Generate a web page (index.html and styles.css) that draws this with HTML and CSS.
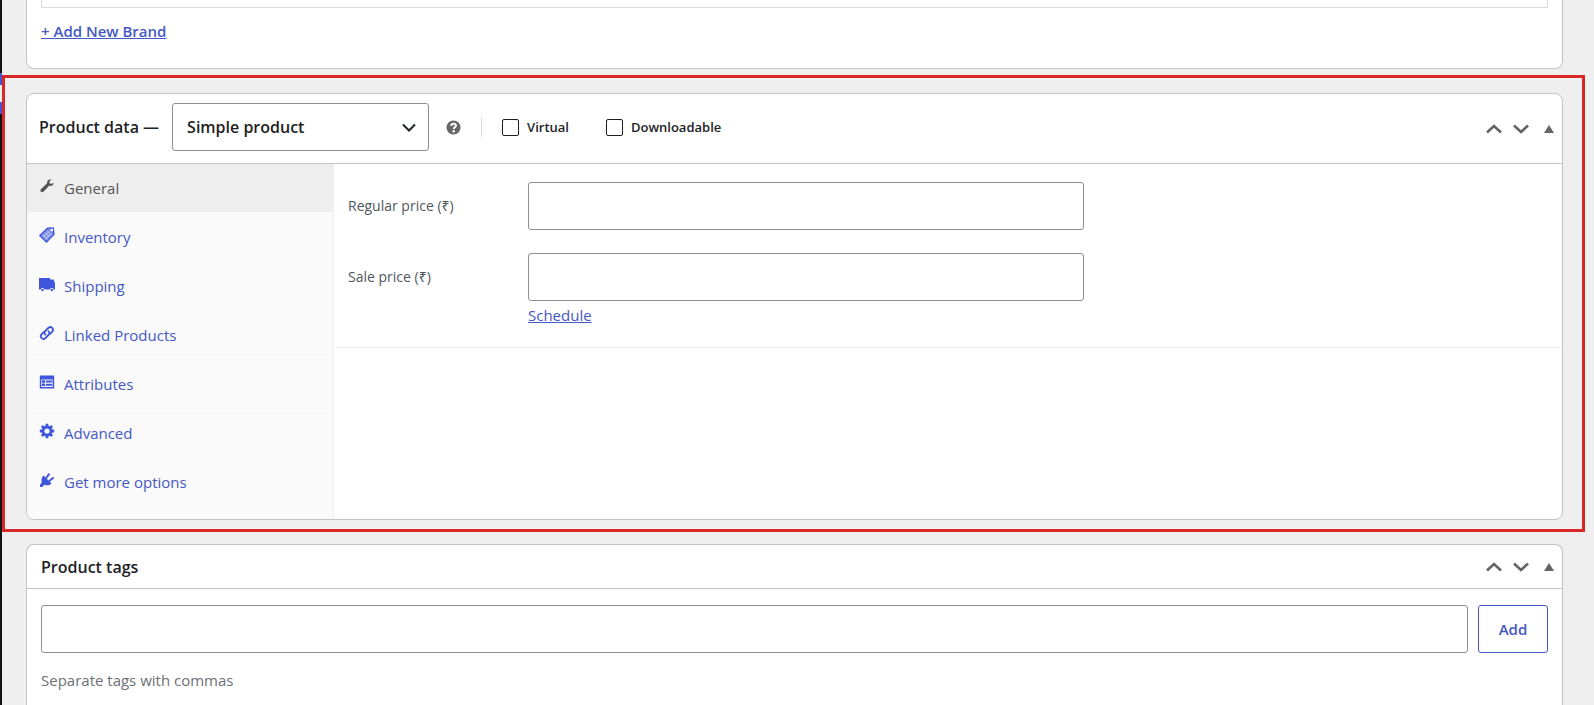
FILE: index.html
```html
<!DOCTYPE html>
<html lang="en">
<head>
  <meta charset="UTF-8">
  <meta name="viewport" content="width=device-width, initial-scale=1.0">
  <title>Edit product</title>
  <link rel="stylesheet" href="styles.css">
</head>
<body>
  <div class="menu-edge">
    <span class="menu-current"></span>
    <span class="menu-sub"></span>
    <span class="menu-current"></span>
  </div>

  <main class="content">
    <section class="postbox brands">
      <div class="brand-list"></div>
      <a class="link add-brand" href="#">+ Add New Brand</a>
    </section>

    <section class="postbox product-data">
      <header class="postbox-header data-header">
        <label class="title" for="product-type">Product data —</label>
        <div class="select-wrap">
          <select id="product-type">
            <option>Simple product</option>
          </select>
          <svg class="select-arrow" viewBox="0 0 14 8"><path d="M1 1l6 6 6-6" fill="none" stroke="currentColor" stroke-width="2"/></svg>
        </div>
        <svg class="help" viewBox="0 0 16 16">
          <circle cx="8" cy="8" r="7.5" fill="#666"/>
          <path d="M5.6 6.3c0-3.2 5-3.1 5-.3 0 1.7-2.4 1.8-2.4 3.5" fill="none" stroke="#fff" stroke-width="2.1"/>
          <circle cx="8.2" cy="12" r="1.3" fill="#fff"/>
        </svg>
        <div class="type-options">
          <label class="check"><input type="checkbox"> Virtual</label>
          <label class="check"><input type="checkbox"> Downloadable</label>
        </div>
        <div class="handles">
          <button type="button" aria-label="Move up"><svg viewBox="0 0 16 10"><path d="M1 8.5l7-6.5 7 6.5" fill="none" stroke="currentColor" stroke-width="2.6"/></svg></button>
          <button type="button" aria-label="Move down"><svg viewBox="0 0 16 10"><path d="M1 1.5l7 6.5 7-6.5" fill="none" stroke="currentColor" stroke-width="2.6"/></svg></button>
          <button type="button" class="toggle" aria-label="Toggle panel"><svg viewBox="0 0 10 8"><path d="M5 0l5 8H0z" fill="currentColor"/></svg></button>
        </div>
      </header>

      <div class="data-body">
        <nav class="tabs">
          <a class="tab active" href="#">
            <svg viewBox="0 0 16 16"><path d="M14.4 4.8l-2.2 1.3-1.7-1 .1-2 2.1-1.3C10.100.8 7.700 2.700 8.100 5.300L1.900 11.200c-1.500 1.600.8 4 2.500 2.500l5.800-5.900c2.700.6 4.800-.8 4.200-3z" fill="currentColor"/></svg>
            General
          </a>
          <a class="tab" href="#">
            <svg viewBox="0 0 16 16">
              <path d="M8.5 1.2l5.7-.3.8 6.3L7.500 15 .8 8.600z" fill="currentColor" opacity=".7"/>
              <path d="M8.5 1.2l5.7-.3.8 6.3L7.500 15 .8 8.600z" fill="none" stroke="currentColor" stroke-width="1.3"/>
              <path d="M4 7.5l5 5M6 5.5l5 5M8 3.5l5 5M4 10.5l6-6M6 12.500l6-6" stroke="#fff" stroke-width=".6"/>
              <circle cx="12.7" cy="3" r="1.3" fill="#fff"/>
            </svg>
            Inventory
          </a>
          <a class="tab" href="#">
            <svg viewBox="0 0 16 16"><path d="M0 2h11v1.500h3.500L16 7v6.500h-1.300a2 2 0 0 0-3.800 0H5.400a2 2 0 0 0-3.800 0H0z" fill="currentColor"/><circle cx="3.500" cy="14" r="1.200" fill="currentColor"/><circle cx="12.800" cy="14" r="1.200" fill="currentColor"/></svg>
            Shipping
          </a>
          <a class="tab" href="#">
            <svg viewBox="0 0 16 16"><g fill="none" stroke="currentColor" stroke-width="1.8" stroke-linecap="round"><path d="M6.300 9.700c-1.300-1.200-1-2.700 0-3.700l3-3c2.700-2.500 6.300.9 3.900 3.700l-2 2.100"/><path d="M9.500 6.300c1.300 1.200 1 2.700 0 3.700l-3 3c-2.700 2.500-6.300-.9-3.900-3.700l2-2.100"/></g></svg>
            Linked Products
          </a>
          <a class="tab" href="#">
            <svg viewBox="0 0 16 16"><path d="M.8 1.500h14.400v13H.8zM2.300 5.500v7.500h11.400V5.500z" fill="currentColor" fill-rule="evenodd"/><path d="M3 6.200h3v2.500H3zM6.800 6.500h6.500v2H6.800zM3 9.600h3V12H3zM6.800 9.800h6.500v2H6.800z" fill="currentColor"/></svg>
            Attributes
          </a>
          <a class="tab" href="#">
            <svg viewBox="0 0 16 16"><circle cx="8" cy="8" r="4" fill="none" stroke="currentColor" stroke-width="2.8"/><path d="M8 .8v3M8 12.200v3M.8 8h3M12.200 8h3M2.900 2.900L5 5M11 11l2.100 2.100M2.900 13.100L5 11M11 5l2.100-2.100" stroke="currentColor" stroke-width="2.8"/></svg>
            Advanced
          </a>
          <a class="tab" href="#">
            <svg viewBox="0 0 16 16"><path d="M4.500 3.500l8 8c-1.900 2-4.900 2.300-7 1.200L3.200 15H1v-2.200l1.800-2.300C1.900 8 2.700 5.300 4.500 3.500z" fill="currentColor"/><path d="M7.200 6L10 2.200M10.300 9l3.700-3" stroke="currentColor" stroke-width="2" stroke-linecap="round"/></svg>
            Get more options
          </a>
        </nav>

        <div class="panel">
          <div class="price-fields">
            <div class="field">
              <label for="regular-price">Regular price (₹)</label>
              <input type="text" id="regular-price">
            </div>
            <div class="field">
              <label for="sale-price">Sale price (₹)</label>
              <input type="text" id="sale-price">
            </div>
            <a class="link schedule" href="#">Schedule</a>
          </div>
        </div>
      </div>
    </section>

    <section class="postbox tags">
      <header class="postbox-header">
        <h2 class="title">Product tags</h2>
        <div class="handles">
          <button type="button" aria-label="Move up"><svg viewBox="0 0 16 10"><path d="M1 8.5l7-6.5 7 6.5" fill="none" stroke="currentColor" stroke-width="2.6"/></svg></button>
          <button type="button" aria-label="Move down"><svg viewBox="0 0 16 10"><path d="M1 1.5l7 6.5 7-6.5" fill="none" stroke="currentColor" stroke-width="2.6"/></svg></button>
          <button type="button" class="toggle" aria-label="Toggle panel"><svg viewBox="0 0 10 8"><path d="M5 0l5 8H0z" fill="currentColor"/></svg></button>
        </div>
      </header>
      <div class="tags-body">
        <div class="tag-row">
          <input type="text" aria-label="Add new tag" aria-describedby="tag-help">
          <button type="button" class="add-button">Add</button>
        </div>
        <p class="howto" id="tag-help">Separate tags with commas</p>
      </div>
    </section>
  </main>
</body>
</html>
```

FILE: styles.css
```css
* { box-sizing: border-box; }

body {
  display: flex;
  min-height: 100vh;
  margin: 0;
  background: #efefef;
  color: #1d2327;
  font-family: "Open Sans", "Noto Sans", sans-serif;
  font-size: 15px;
  line-height: 24px;
}

input, select, button { font-family: inherit; font-size: 15px; }

/* right edge of the admin menu */
.menu-edge {
  width: 2px;
  padding-top: 73px;
  background: #111214;
}
.menu-edge span { display: block; height: 12px; }
.menu-edge .menu-current { background: #4f51cf; }
.menu-edge .menu-sub { height: 17px; background: #efefef; }

.content {
  flex: 1;
  display: flex;
  flex-direction: column;
  gap: 24px;
  padding: 0 31px 0 24px;
}

.postbox {
  background: #fff;
  border: 1px solid #c3c4c7;
  border-radius: 8px;
}
.postbox-header {
  display: flex;
  align-items: center;
  height: 44px;
  padding: 0 8px 0 14px;
  border-bottom: 1px solid #c3c4c7;
}
.title { margin: 0; font-size: 16px; font-weight: 600; }

.link { color: #4558c4; text-decoration: underline; }

/* brands */
.brands {
  padding: 0 14px 25px;
  border-top: 0;
  border-radius: 0 0 8px 8px;
}
.brand-list {
  height: 8px;
  margin-bottom: 11px;
  border: 1px solid #dcdcde;
  border-top: 0;
}
.add-brand { display: block; width: max-content; font-weight: 600; }

/* product data */
.product-data { position: relative; }
.product-data::after {
  content: "";
  position: absolute;
  inset: -19px -23px -13px -25px;
  border: 3px solid #d82828;
  pointer-events: none;
}
.data-header { height: 70px; padding-left: 12px; padding-bottom: 3px; }

.select-wrap { position: relative; margin-left: 13px; }
.select-wrap select {
  display: block;
  width: 257px;
  height: 48px;
  padding: 0 14px;
  appearance: none;
  background: #fff;
  border: 1px solid #8c8f94;
  border-radius: 3px;
  color: #1e1e1e;
  font-size: 16px;
  font-weight: 600;
}
.select-arrow {
  position: absolute;
  right: 13px;
  top: 20px;
  width: 14px;
  height: 9px;
  pointer-events: none;
}

.help { width: 15px; height: 15px; margin-left: 17px; }

.type-options {
  display: flex;
  align-items: center;
  gap: 37px;
  height: 20px;
  margin-left: 20px;
  padding-left: 20px;
  border-left: 1px solid #dcdcde;
}
.check {
  display: flex;
  align-items: center;
  gap: 8px;
  font-size: 13px;
  font-weight: 600;
}
.check input {
  width: 17px;
  height: 17px;
  margin: 0;
  appearance: none;
  background: #fff;
  border: 1px solid #1e1e1e;
  border-radius: 2px;
}

.handles { display: flex; align-items: center; gap: 11px; margin-left: auto; }
.data-header .handles { padding-top: 3px; }
.handles button {
  display: flex;
  padding: 0;
  background: none;
  border: 0;
  color: #646464;
  cursor: pointer;
}
.handles svg { width: 16px; height: 10px; }
.handles .toggle { margin-left: 4px; }
.handles .toggle svg { width: 10px; height: 8px; }

.data-body { display: flex; }
.tabs {
  width: 307px;
  padding-bottom: 12px;
  background: #fafafa;
  border-right: 1px solid #eee;
  border-bottom-left-radius: 7px;
}
.tab {
  display: flex;
  align-items: center;
  gap: 9px;
  height: 49px;
  padding: 0 12px;
  border-bottom: 1px solid #f7f7f7;
  color: #4558c4;
  text-decoration: none;
}
.tab svg { width: 16px; height: 16px; margin-bottom: 5px; color: #3f56dc; }
.tab.active { background: #eee; color: #555; }
.tab.active svg { color: #555; }

.panel { flex: 1; padding-left: 2px; }
.price-fields {
  display: flex;
  flex-direction: column;
  padding: 18px 12px 20px;
  border-bottom: 1px solid #eee;
}
.field { display: flex; align-items: center; }
.field + .field { margin-top: 23px; }
.field label { width: 180px; color: #50575e; font-size: 14px; }
.field input { width: 556px; }
.field input, .tag-row input {
  height: 48px;
  padding: 0 12px;
  background: #fff;
  border: 1px solid #8c8f94;
  border-radius: 3px;
}
.schedule { margin: 2px 0 0 180px; width: max-content; }

/* tags */
.tags {
  flex: 1;
  border-bottom: 0;
  border-radius: 8px 8px 0 0;
}
.tags-body { padding: 16px 14px 11px; }
.tag-row { display: flex; gap: 10px; }
.tag-row input { flex: 1; }
.add-button {
  width: 70px;
  height: 48px;
  background: #fff;
  border: 1px solid #4558c4;
  border-radius: 3px;
  color: #4558c4;
  font-weight: 600;
  cursor: pointer;
}
.howto { margin: 15px 0 0; color: #6c7075; }
```
